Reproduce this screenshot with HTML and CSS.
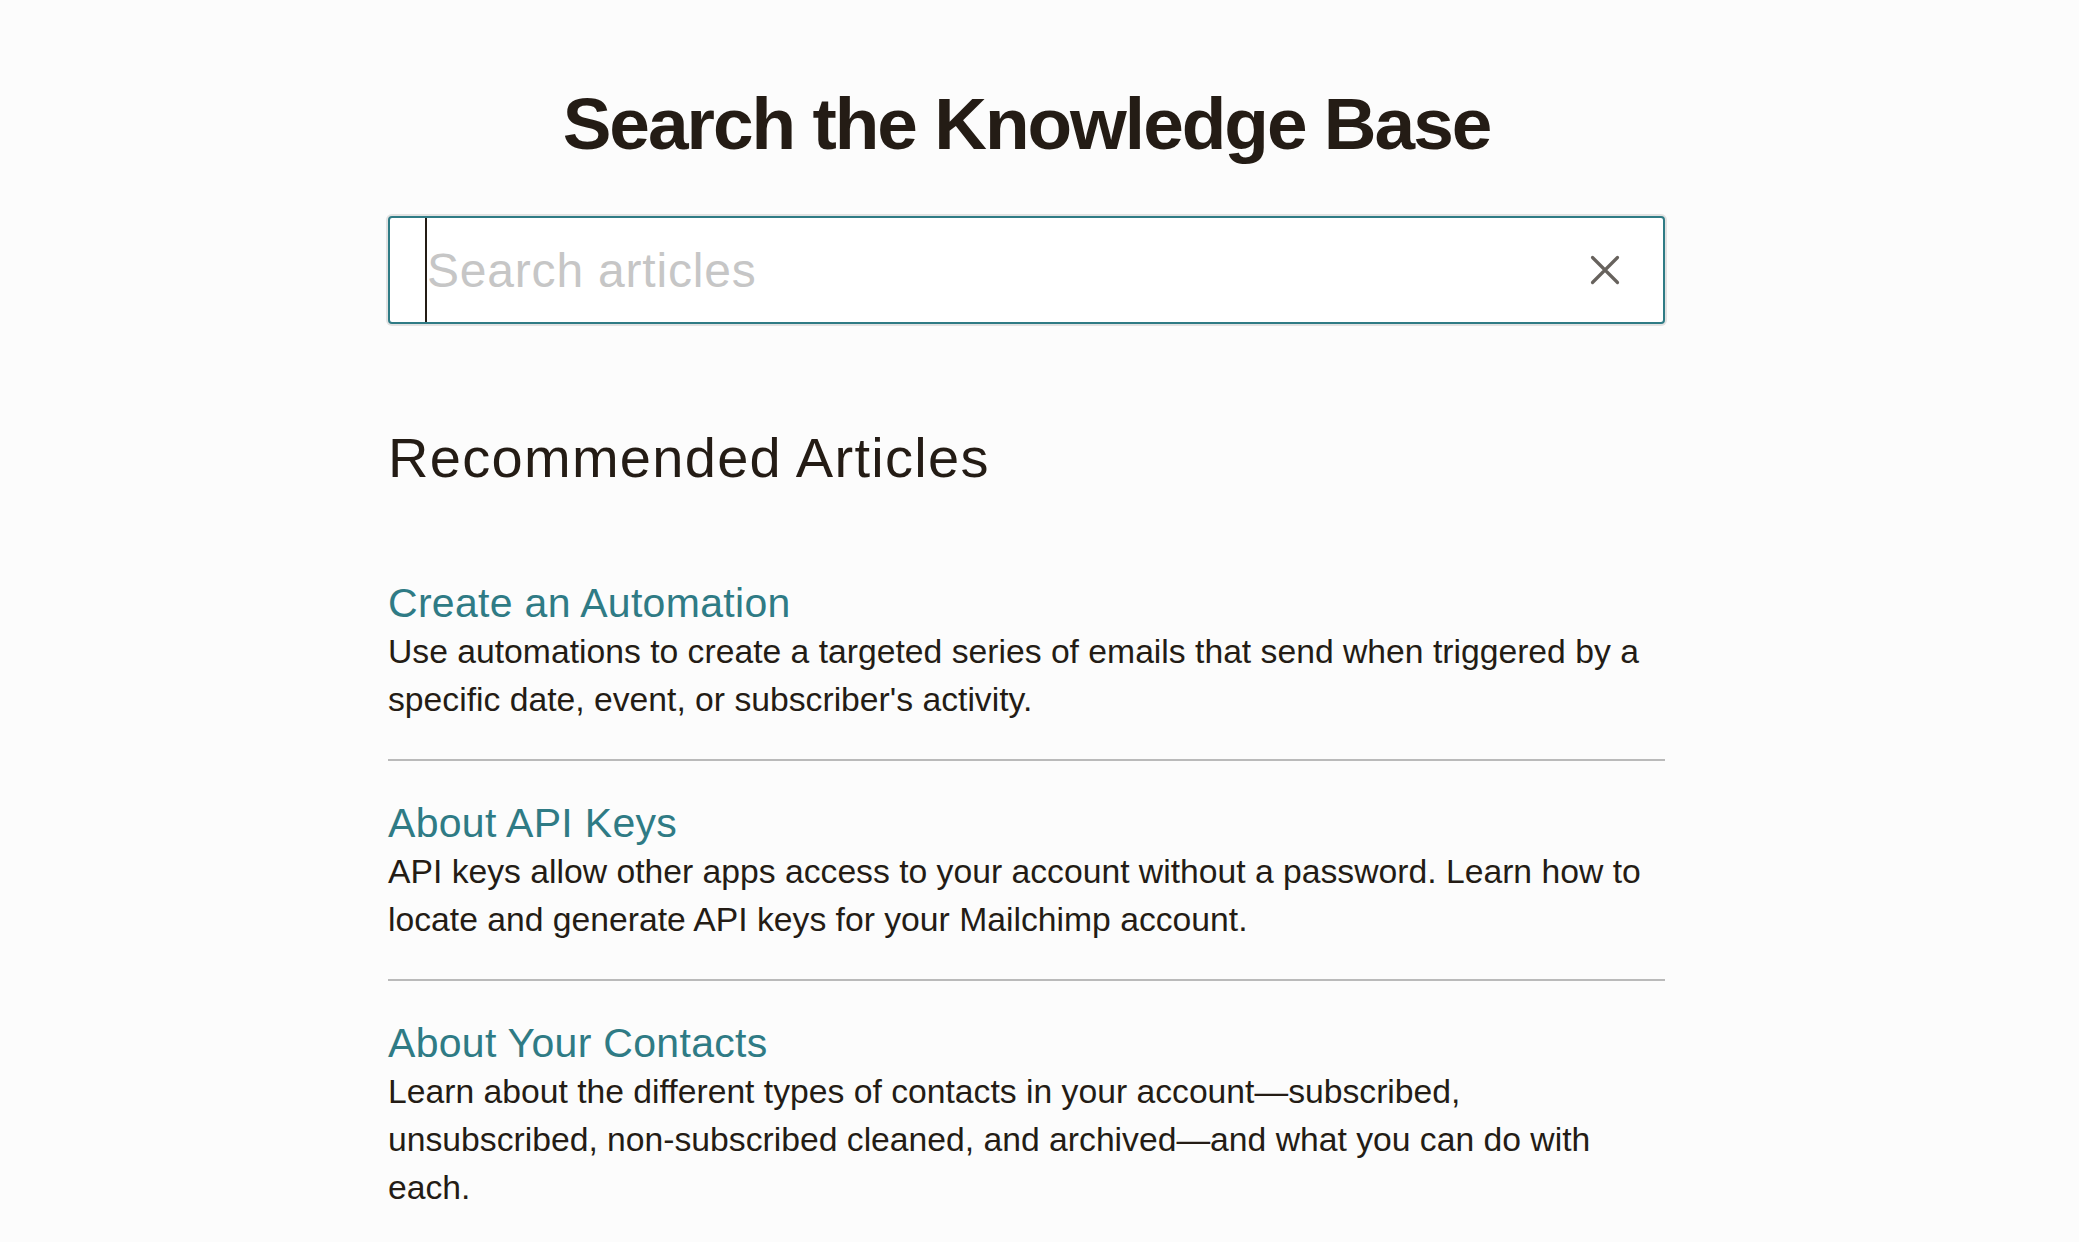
FILE: index.html
```html
<!DOCTYPE html>
<html lang="en">
<head>
<meta charset="utf-8">
<title>Search the Knowledge Base</title>
<link rel="stylesheet" href="styles.css">
</head>
<body>
<main class="page">
  <h1 class="page-title">Search the Knowledge Base</h1>
  <div class="search">
    <span class="search-caret"></span>
    <input class="search-input" type="text" placeholder="Search articles">
    <button class="search-clear" type="button" aria-label="Clear search">
      <svg viewBox="0 0 30 30" width="30" height="30" aria-hidden="true">
        <path d="M2.5 2.5 L27.5 27.5 M27.5 2.5 L2.5 27.5" fill="none" stroke="#67625d" stroke-width="3.2" stroke-linecap="round"/>
      </svg>
    </button>
  </div>

  <h2 class="section-title">Recommended Articles</h2>
  <ul class="articles">
    <li class="article">
      <a class="article-title" href="#">Create an Automation</a>
      <p class="article-desc">Use automations to create a targeted series of emails that send when triggered by a specific date, event, or subscriber's activity.</p>
    </li>
    <li class="article">
      <a class="article-title" href="#">About API Keys</a>
      <p class="article-desc">API keys allow other apps access to your account without a password. Learn how to locate and generate API keys for your Mailchimp account.</p>
    </li>
    <li class="article">
      <a class="article-title" href="#">About Your Contacts</a>
      <p class="article-desc">Learn about the different types of contacts in your account—subscribed, unsubscribed, non-subscribed cleaned, and archived—and what you can do with each.</p>
    </li>
  </ul>
</main>
</body>
</html>
```

FILE: styles.css
```css
html, body {
  margin: 0;
  padding: 0;
}
body {
  background: #fcfcfc;
  color: #241c15;
  font-family: "Liberation Sans", Arial, sans-serif;
  padding-right: 26px;
}
.page {
  width: 1277px;
  margin: 0 auto;
  padding-bottom: 80px;
}
.page-title {
  margin: 82px 0 0;
  font-size: 73px;
  line-height: 84px;
  font-weight: 700;
  letter-spacing: -2px;
  text-align: center;
  color: #241c15;
}
.search {
  margin-top: 50px;
  height: 104px;
  border: 2px solid #2f7b85;
  border-radius: 4px;
  box-shadow: 0 0 0 2px #e2e2e2;
  background: #ffffff;
  display: flex;
  align-items: stretch;
  padding-left: 35px;
  padding-right: 43px;
}
.search-caret {
  width: 2px;
  background: #241c15;
  flex: none;
}
.search-input {
  flex: 1;
  border: 0;
  outline: none;
  background: transparent;
  padding: 0;
  font-family: "Liberation Sans", Arial, sans-serif;
  font-size: 48px;
  letter-spacing: 0.8px;
  color: #241c15;
}
.search-input::placeholder {
  color: #c6c6c6;
  opacity: 1;
}
.search-clear {
  flex: none;
  align-self: center;
  border: 0;
  background: transparent;
  padding: 0;
  width: 30px;
  height: 30px;
  display: flex;
  cursor: pointer;
}
.section-title {
  margin: 100px 0 0;
  font-size: 56px;
  line-height: 67px;
  font-weight: 400;
  letter-spacing: 1.3px;
}
.articles {
  list-style: none;
  margin: 50px 0 0;
  padding: 0;
}
.article {
  padding: 38px 0 36px;
  border-bottom: 2px solid #bababa;
}
.article:last-child {
  border-bottom: 0;
}
.article-title {
  display: block;
  font-size: 41px;
  line-height: 48px;
  letter-spacing: 0.3px;
  color: #2f7b85;
  text-decoration: none;
}
.article-desc {
  margin: 0;
  font-size: 33.7px;
  line-height: 48px;
  color: #241c15;
}
```
